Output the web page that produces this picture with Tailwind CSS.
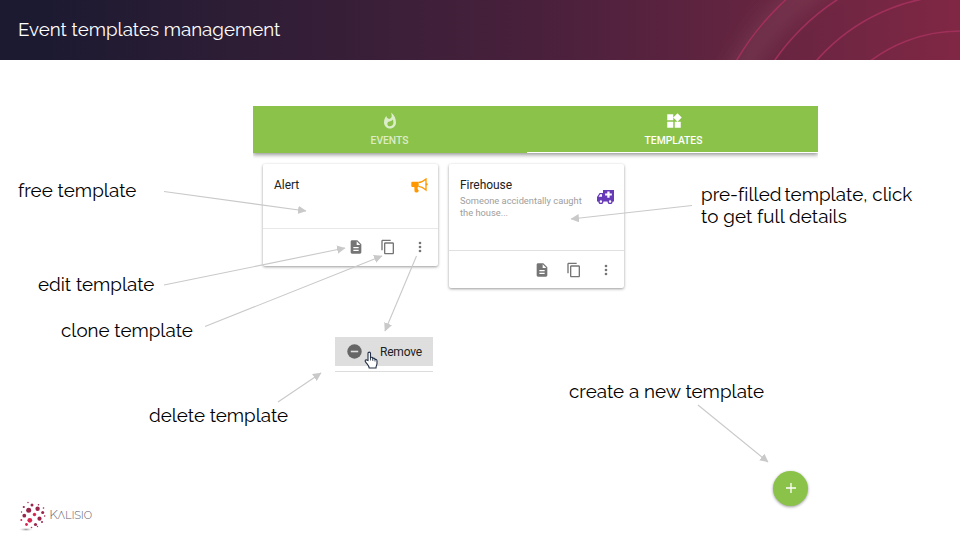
<!DOCTYPE html>
<html lang="en"><head><meta charset="utf-8"><title>Event templates management</title>
<script src="https://cdn.jsdelivr.net/npm/@tailwindcss/browser@4"></script></head>
<body class="bg-white">
<svg class="hidden">
<symbol id="doc" viewBox="0 0 24 24"><path fill="#757575" d="M14 2H6c-1.100 0-2 .9-2 2v16c0 1.100.9 2 2 2h12c1.100 0 2-.9 2-2V8l-6-6zm2 16H8v-2h8v2zm0-4H8v-2h8v2zm-3-5V3.500L18.500 9H13z"/></symbol>
<symbol id="copy" viewBox="0 0 24 24"><path fill="#757575" d="M16 1H4c-1.100 0-2 .9-2 2v14h2V3h12V1zm3 4H8c-1.100 0-2 .9-2 2v14c0 1.100.9 2 2 2h11c1.100 0 2-.9 2-2V7c0-1.100-.9-2-2-2zm0 16H8V7h11v14z"/></symbol>
<symbol id="more" viewBox="0 0 24 24"><g fill="#757575"><circle cx="12" cy="6" r="2"/><circle cx="12" cy="12" r="2"/><circle cx="12" cy="18" r="2"/></g></symbol>
</svg>
<div class="relative flex h-[540px] w-[960px] flex-col overflow-hidden bg-white font-['Raleway','Lato',sans-serif] text-black">
<header class="relative flex h-[60px] shrink-0 items-center bg-linear-to-r from-[#1c1a31] from-5% via-[#49203c] via-56% to-[#802744] pl-[18px]">
<svg class="absolute inset-0" width="960" height="60" fill="none">
<defs><filter id="soft" filterUnits="userSpaceOnUse" x="640" y="-120" width="640" height="600"><feGaussianBlur stdDeviation="10"/></filter></defs>
<circle cx="960" cy="191" r="251" stroke="#a46b77" stroke-opacity=".22" stroke-width="24" filter="url(#soft)"/>
<g stroke="#a0305a" stroke-width="1.600"><circle cx="960" cy="191" r="258.700"/><circle cx="960" cy="189" r="225.600"/><circle cx="960" cy="185.700" r="190.400"/><circle cx="960" cy="180" r="149"/></g></svg>
<h1 class="relative -mt-[2px] text-[18.750px] leading-6 whitespace-nowrap text-white">Event templates management</h1>
</header>
<main class="mt-[46px] ml-[253px] w-[565px] font-['Roboto',sans-serif]">
<div class="h-[58px] overflow-hidden">
<nav class="grid h-[47px] grid-cols-[274px_291px] bg-[#8bc34a] text-[10.500px] font-medium text-white shadow-[0_2px_4px_#0006]">
<div class="flex flex-col items-center pt-[6px] pr-px text-white/70"><svg width="18" height="18" viewBox="0 0 24 24" fill="currentColor"><path d="M13.500.67s.74 2.650.74 4.800c0 2.060-1.350 3.730-3.410 3.730-2.070 0-3.630-1.670-3.630-3.730l.03-.36C5.210 7.510 4 10.620 4 14c0 4.420 3.580 8 8 8s8-3.580 8-8C20 8.610 17.410 3.800 13.500.67zM11.710 19c-1.780 0-3.220-1.400-3.220-3.140 0-1.620 1.050-2.760 2.810-3.120 1.770-.36 3.600-1.210 4.620-2.580.39 1.290.59 2.650.59 4.040 0 2.650-2.150 4.800-4.800 4.800z"/></svg><span class="mt-[4px] text-[10.300px] leading-[14px]">EVENTS</span></div>
<div class="flex flex-col items-center border-b-[1.500px] border-white pt-[6px] pl-[2px]"><svg width="18" height="18" viewBox="0 0 24 24" fill="currentColor"><path d="M13 13v8h8v-8h-8zM3 21h8v-8H3v8zM3 3v8h8V3H3zm13.660-1.310L11 7.340 16.660 13l5.660-5.660-5.660-5.650z"/></svg><span class="mt-[4px] text-[10.300px] leading-[14px]">TEMPLATES</span></div>
</nav></div>
<div class="flex items-start gap-[11px] pl-[10px]">
<section class="h-[102px] w-[175px] rounded-[2px] bg-white shadow-[0_1px_3px_#0006]">
<div class="flex h-[65px] justify-between border-b border-[#e8e8e8] pt-[13px] pr-[10px] pl-[11px]"><h2 class="text-[12px] leading-4 tracking-[-0.05px] text-[#212121]">Alert</h2>
<svg class="mt-px" width="17" height="15" viewBox="0 0 17 15"><path fill="#ff9800" d="M1.300 3.700h6.400v5.200H6.600l.1 2.200 1 1.300c0 1.500-1.200 2-2.500 2-1.500 0-1.700-.8-1.700-2L3.300 8.900h-2Q.3 8.900.3 7.900V4.700q0-1 1-1z"/><path fill="none" stroke="#ff9800" stroke-width="1.300" d="M7.700 4.400c3-.1 5-1.600 7.300-3.500v11.200c-2.300-2-4.300-3.500-7.300-3.700"/><circle cx="15.700" cy="6.300" r="1.100" fill="#ff9800"/></svg></div>
<div class="flex h-[36px] items-center justify-end gap-[16px] pr-[10.500px]"><svg width="16" height="16"><use href="#doc"/></svg><svg width="16" height="16"><use href="#copy"/></svg><svg width="16" height="16"><use href="#more"/></svg></div>
</section>
<section class="h-[124px] w-[175px] rounded-[2px] bg-white shadow-[0_1px_3px_#0006]">
<div class="flex h-[87px] justify-between border-b border-[#e0e0e0] pt-[13px] pr-[10px] pl-[11px]"><div><h2 class="text-[12px] leading-4 tracking-[-0.05px] text-[#212121]">Firehouse</h2><p class="mt-[2px] text-[9.300px] leading-[11.500px] whitespace-nowrap text-[#9e9e9e]">Someone accidentally caught<br>the house...</p></div>
<svg class="mt-[12.500px] -ml-1 shrink-0" width="18" height="15" viewBox="0 0 18 15"><path fill="#673ab7" d="M7 0h11v11.500h-1.500a2.500 2.500 0 0 1-4.800 0H7.300a2.500 2.500 0 0 1-4.800 0H1V7l2.600-4H7z"/><path fill="white" d="M11.300 1.400h2.300v2.200h2.200v2h-2.200v2.200h-2.300V5.600H9.100v-2h2.200zM4.200 4.300H6v2.500H2.600z"/><circle cx="4.900" cy="11.500" r="1.900" fill="#fff" stroke="#673ab7" stroke-width="1.300"/><circle cx="14.100" cy="11.500" r="1.900" fill="#fff" stroke="#673ab7" stroke-width="1.300"/></svg></div>
<div class="flex h-[37px] items-center justify-end gap-[16px] pr-[10.500px]"><svg width="16" height="16"><use href="#doc"/></svg><svg width="16" height="16"><use href="#copy"/></svg><svg width="16" height="16"><use href="#more"/></svg></div>
</section></div>
</main>
<div class="absolute top-[337px] left-[335px] h-[35px] w-[98px] border-b border-[#dcdcdc] font-['Roboto',sans-serif]"><div class="flex h-[29px] items-center bg-[#dedede] pl-[12px]"><svg width="15" height="15"><circle cx="7.500" cy="7.500" r="7.200" fill="#666"/><path d="M3.800 7.500h7.400" stroke="#dedede" stroke-width="1.600"/></svg><span class="ml-[18px] text-[12px] tracking-[-0.2px] text-[#212121]">Remove</span></div></div>
<div class="absolute top-[471px] left-[773px] flex size-[35px] items-center justify-center rounded-full bg-[#8bc34a] shadow-[0_1px_3px_#0006]"><svg class="-mt-px" width="10" height="10"><path d="M5 0v10M0 5h10" stroke="white" stroke-width="1.300"/></svg></div>
<svg class="absolute inset-0" width="960" height="540">
<defs><marker id="tip" markerUnits="userSpaceOnUse" markerWidth="9" markerHeight="9" refX="8" refY="4.200" orient="auto"><path d="M0 0l8.500 4.200L0 8.400z" fill="#c9c9c9"/></marker>
<radialGradient id="shade"><stop stop-color="#999"/><stop offset="1" stop-color="#fff" stop-opacity="0"/></radialGradient></defs>
<g stroke="#c9c9c9" stroke-width="1.100" fill="none"><path marker-end="url(#tip)" d="M164 191.500L306 211"/><path marker-end="url(#tip)" d="M164 285L345 248"/><path marker-end="url(#tip)" d="M205 326.500L382 256"/><path marker-end="url(#tip)" d="M416.500 256L385 331"/><path marker-end="url(#tip)" d="M278 402L321 373"/><path marker-end="url(#tip)" d="M692 205.500L571 219"/><path marker-end="url(#tip)" d="M698 405L768 462"/></g>
<path transform="translate(364 351.500)" d="M4 9V1.800C4 .2 6.500.2 6.500 1.800V6.300C7.200 5.300 8.800 5.700 8.800 7 9.600 6.200 11 6.700 11 8c1.200-.4 2 .3 2 1.500V12c0 1.500-1 2.200-1 4.500H5.200C5 14 3 12.500 1.700 10.600.5 9.100 1.500 8.100 2.600 8.400z" fill="white" stroke="#222e45" stroke-width="1.100"/><path d="M370.500 357.500v3M372.800 358.500v2.500M375 359.500v2" stroke="#222e45" stroke-width=".8"/>
<ellipse cx="26" cy="529.500" rx="8" ry="2.200" fill="url(#shade)"/>
<g fill="#97264b"><circle cx="32" cy="505" r="1.500"/><circle cx="28.700" cy="510.300" r="2.500"/><circle cx="37.600" cy="508.700" r="2.200"/><circle cx="24.300" cy="515.700" r="1.900"/><circle cx="39.500" cy="518.700" r="2.100"/><circle cx="42.700" cy="512.500" r="1.500"/><circle cx="35.500" cy="524.500" r="1.600"/><circle cx="42" cy="522" r="1"/><circle cx="23.800" cy="507" r="1.100"/><circle cx="38.500" cy="504.700" r=".8"/><circle cx="43.500" cy="508" r=".8"/><circle cx="44.700" cy="516" r=".8"/><circle cx="21.500" cy="512" r=".7"/><circle cx="28" cy="502.500" r=".7"/></g>
<g fill="#d6274f"><circle cx="34.500" cy="514.500" r="1.700"/><circle cx="29.800" cy="520.300" r="2.400"/><circle cx="26.500" cy="524.500" r="1.400"/><circle cx="21.300" cy="520" r="1"/><circle cx="31.500" cy="527.500" r=".8"/><circle cx="37.500" cy="526.500" r=".7"/></g>
</svg>
<div class="absolute top-[507px] left-[49.500px] text-[11px] leading-[16px] font-light tracking-[0.1px] whitespace-nowrap text-[#5c5c6c]"><span class="text-[13px]">K</span>ΛLISIO</div>
<div class="text-[18.800px] leading-[22px] whitespace-nowrap">
<p class="absolute top-[179px] left-[18px] tracking-[0.05px]">free template</p>
<p class="absolute top-[273px] left-[38px]">edit template</p>
<p class="absolute top-[319px] left-[61px]">clone template</p>
<p class="absolute top-[404px] left-[149px]">delete template</p>
<p class="absolute top-[380px] left-[569px] tracking-[0.03px]">create a new template</p>
<p class="absolute top-[183px] left-[701px] tracking-[0.05px]"><span class="-mr-[2px]">pre-filled</span> template, click<br>to get full details</p>
</div>
</div></body></html>
